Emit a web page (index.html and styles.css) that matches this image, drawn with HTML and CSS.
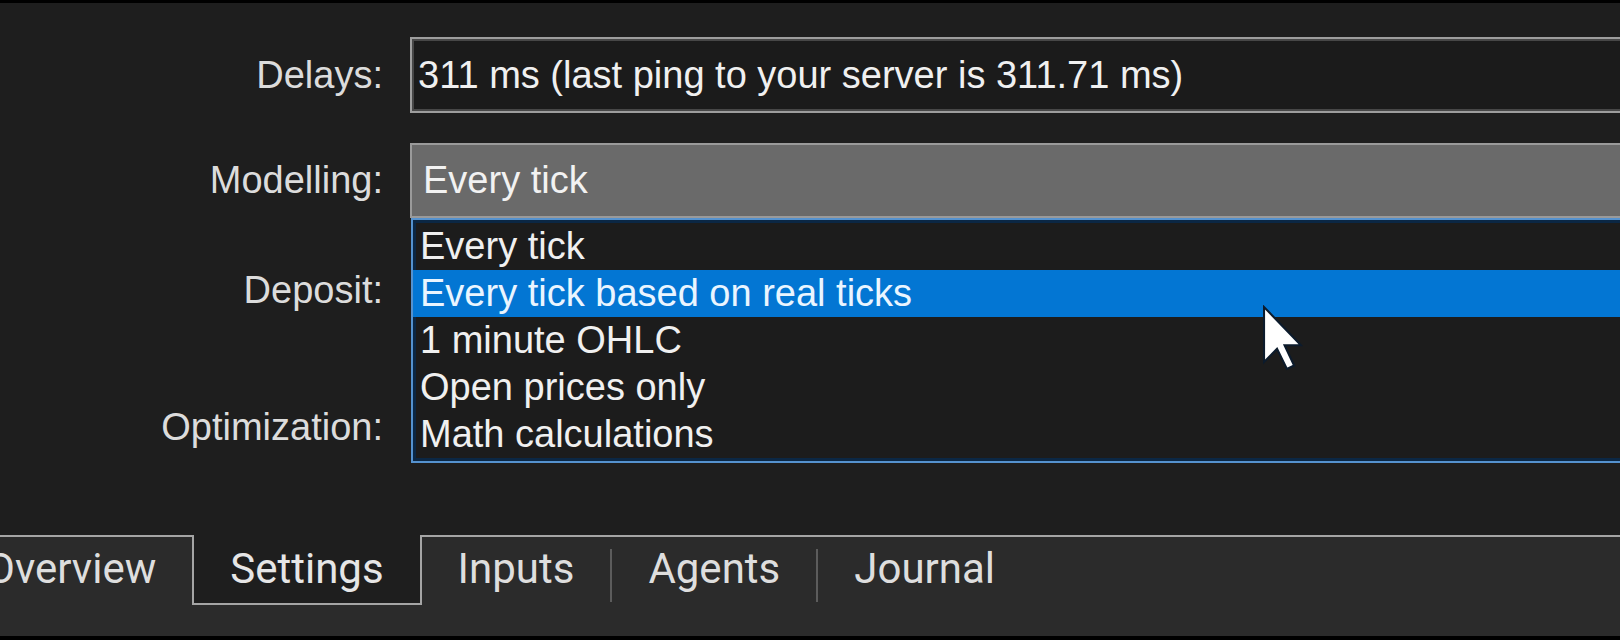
FILE: index.html
```html
<!DOCTYPE html>
<html lang="en">
<head>
  <meta charset="UTF-8">
  <title>Strategy Tester — Settings</title>
  <link rel="stylesheet" href="styles.css">
</head>
<body>

<div class="window">

  <!-- Tester settings form -->
  <div class="settings">
    <div class="row">
      <label class="label">Delays:</label>
      <div class="field">311 ms (last ping to your server is 311.71 ms)</div>
    </div>

    <div class="row row-combo">
      <label class="label">Modelling:</label>
      <div class="combo-wrap">
        <div class="combo">Every tick</div>
        <ul class="combo-list">
          <li>Every tick</li>
          <li class="selected">Every tick based on real ticks</li>
          <li>1 minute OHLC</li>
          <li>Open prices only</li>
          <li>Math calculations</li>
        </ul>
      </div>
    </div>

    <div class="row row-deposit">
      <label class="label">Deposit:</label>
      <div class="slot"></div>
    </div>

    <div class="row row-optimization">
      <label class="label">Optimization:</label>
      <div class="slot"></div>
    </div>
  </div>

  <!-- Bottom tab strip -->
  <div class="tabs">
    <div class="tab tab-first">Overview</div>
    <div class="tab active">Settings</div>
    <div class="tab">Inputs</div>
    <span class="sep"></span>
    <div class="tab">Agents</div>
    <span class="sep"></span>
    <div class="tab">Journal</div>
  </div>

  <!-- Mouse pointer over the open list -->
  <svg class="cursor" viewBox="0 0 12 19" preserveAspectRatio="none">
    <path d="M0.6 0.6 L0.6 16.4 L4.4 12.6 L7.3 18.4 L9.4 17.4 L6.6 11.6 L11.4 11.6 Z"
          fill="#fff" stroke="#0c1b2c" stroke-width="0.6" stroke-linejoin="miter"/>
  </svg>

</div>

</body>
</html>
```

FILE: styles.css
```css
body {
  margin: 0;
  background: #000;
  overflow: hidden;
  font-family: "Liberation Sans", Arial, sans-serif;
}

.window {
  position: relative;
  margin-top: 3px;
  height: 633px;
  display: flex;
  flex-direction: column;
  background: #1e1e1e;
  overflow: hidden;
}

/* Form */
.settings {
  flex: 1;
  display: flex;
  flex-direction: column;
  gap: 30px;
  padding-top: 34px;
  margin-right: -40px;
}
.row {
  display: grid;
  grid-template-columns: 383px 1fr;
  column-gap: 27px;
  height: 76px;
}
.row-combo {
  height: 75px;
}
.row-deposit {
  margin-top: 4px;
}
.row-optimization {
  margin-top: 31px;
}
.label {
  align-self: center;
  text-align: right;
  font-size: 38px;
  color: #dcdcdc;
  white-space: nowrap;
}
.field {
  display: flex;
  align-items: center;
  padding-left: 6px;
  border: 2px solid #9d9d9d;
  box-shadow: inset 0 0 0 2px #474747;
  background: #1b1b1b;
  font-size: 38px;
  color: #f0f0f0;
  white-space: nowrap;
}

/* Modelling drop-down */
.combo-wrap {
  position: relative;
}
.combo {
  box-sizing: border-box;
  height: 100%;
  display: flex;
  align-items: center;
  padding-left: 11px;
  border: 2px solid #9a9a9a;
  background: #6a6a6a;
  font-size: 38px;
  color: #f2f2f2;
  white-space: nowrap;
}
.combo-list {
  position: absolute;
  top: 100%;
  left: 1px;
  right: 0;
  z-index: 1;
  margin: 0;
  padding: 3px 0;
  list-style: none;
  border: 2px solid #5592cf;
  background: #1c1c1c;
  box-shadow: inset 0 0 0 3px #0b2744;
}
.combo-list li {
  height: 47px;
  line-height: 47px;
  padding-left: 7px;
  font-size: 38px;
  color: #f0f0f0;
  white-space: nowrap;
}
.combo-list li.selected {
  background: #0376d3;
  color: #eaf5ff;
}

/* Tabs */
.tabs {
  flex: none;
  height: 99px;
  display: flex;
  align-items: flex-start;
  border-top: 2px solid #a5a5a5;
  background: #2b2b2b;
  font-family: Roboto, "Liberation Sans", sans-serif;
  font-size: 42px;
  color: #dedede;
}
.tab {
  flex: none;
  padding: 7px 36px 0;
  line-height: 49px;
  white-space: nowrap;
}
.tab-first {
  margin-left: -50px;
}
.tab.active {
  margin-top: -2px;
  padding-top: 9px;
  padding-bottom: 10px;
  border: 2px solid #a5a5a5;
  border-top: 0;
  background: #1e1e1e;
  color: #e6e6e6;
}
.sep {
  flex: none;
  width: 2px;
  height: 53px;
  margin-top: 12px;
  background: #5c5c5c;
}

.cursor {
  position: absolute;
  z-index: 2;
  left: 1262px;
  top: 302px;
  width: 41px;
  height: 66px;
}
```
